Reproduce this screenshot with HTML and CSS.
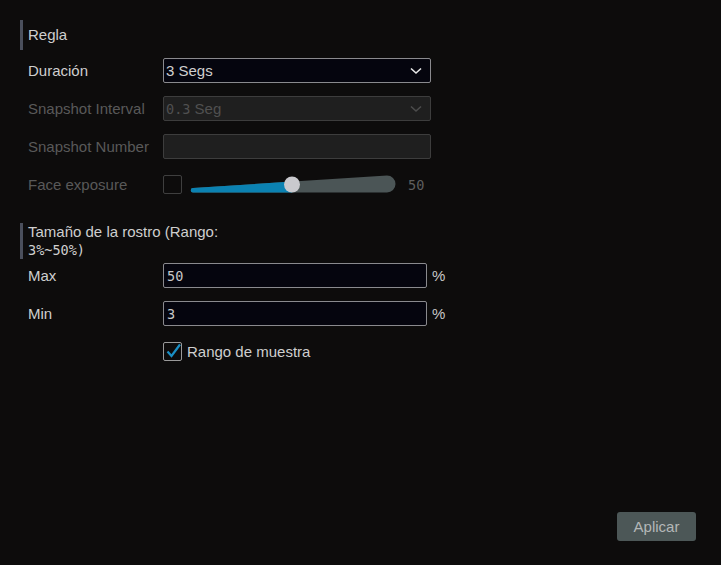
FILE: index.html
```html
<!DOCTYPE html>
<html lang="es">
<head>
    <meta charset="UTF-8">
    <title>Regla</title>
    <link rel="stylesheet" href="styles.css">
</head>
<body>

<div class="page">
    <div class="section-title">Regla</div>

    <div class="row">
        <label class="label">Duración</label>
        <div class="select">
            <span>3 Segs</span>
            <svg class="chevron" width="12" height="8" viewBox="0 0 12 8"><path d="M1 1.5 L6 6 L11 1.5" fill="none" stroke="#e8e8e8" stroke-width="1.6"/></svg>
        </div>
    </div>

    <div class="row disabled">
        <label class="label">Snapshot Interval</label>
        <div class="select">
            <span><span class="mono">0.3</span> Seg</span>
            <svg class="chevron" width="12" height="8" viewBox="0 0 12 8"><path d="M1 1.5 L6 6 L11 1.5" fill="none" stroke="#4c4c4c" stroke-width="1.6"/></svg>
        </div>
    </div>

    <div class="row disabled">
        <label class="label">Snapshot Number</label>
        <div class="select"></div>
    </div>

    <div class="row disabled">
        <label class="label">Face exposure</label>
        <span class="checkbox"></span>
        <svg class="slider" width="206" height="22" viewBox="0 0 206 22">
            <path d="M3 14 L197 1.5 A7.5 7.5 0 0 1 197 18.5 L3 18.5 A2.25 2.25 0 0 1 3 14 Z" fill="#4b5556"/>
            <path d="M3 14 L102 7.6 L102 18.5 L3 18.5 A2.25 2.25 0 0 1 3 14 Z" fill="#0b82b2"/>
            <circle cx="102" cy="10.5" r="8" fill="#c9c9ce"/>
        </svg>
        <span class="value mono">50</span>
    </div>

    <div class="section-title wrap">Tamaño de la rostro (Rango: <span class="mono">3%~50%)</span></div>

    <div class="row">
        <label class="label">Max</label>
        <div class="input mono">50</div>
        <span class="unit">%</span>
    </div>

    <div class="row">
        <label class="label">Min</label>
        <div class="input mono">3</div>
        <span class="unit">%</span>
    </div>

    <div class="row">
        <span class="label"></span>
        <span class="checkbox checked">
            <svg width="18" height="18" viewBox="0 0 18 18"><path d="M3.5 9.5 L7.5 14 L16 2.5" fill="none" stroke="#1a8fc4" stroke-width="2.2"/></svg>
        </span>
        <span class="check-label">Rango de muestra</span>
    </div>

    <div class="footer">
        <button class="btn">Aplicar</button>
    </div>
</div>

</body>
</html>
```

FILE: styles.css
```css
body {
    margin: 0;
    padding: 0;
    background-color: #0d0c0c;
    font-family: "Liberation Sans", Arial, sans-serif;
    font-size: 15px;
    color: #cfcfcf;
}
.page {
    width: 721px;
    height: 565px;
    box-sizing: border-box;
    padding: 20px 0 0 20px;
    display: flex;
    flex-direction: column;
}
.mono {
    font-family: "DejaVu Sans Mono", monospace;
    font-size: 13.5px;
}
.section-title {
    border-left: 3px solid #4a4f5c;
    padding-left: 5px;
    line-height: 30px;
    height: 30px;
    margin-bottom: 8px;
}
.section-title.wrap {
    width: 210px;
    height: auto;
    line-height: 18px;
    margin-top: 13px;
    margin-bottom: 4px;
}
.row {
    display: flex;
    align-items: center;
    height: 25px;
    margin-bottom: 13px;
    padding-left: 8px;
}
.label {
    width: 135px;
    flex-shrink: 0;
}
.disabled .label {
    color: #595959;
}
.select {
    width: 268px;
    height: 25px;
    box-sizing: border-box;
    border: 1px solid #8a8a8e;
    border-radius: 2px;
    background-color: #05050e;
    display: flex;
    align-items: center;
    justify-content: space-between;
    padding: 0 8px 0 2px;
}
.disabled .select {
    background-color: #1f1f1f;
    border-color: #3d3d3d;
    color: #505050;
}
.input {
    width: 264px;
    height: 25px;
    box-sizing: border-box;
    border: 1px solid #8a8a8e;
    border-radius: 2px;
    background-color: #05050e;
    display: flex;
    align-items: center;
    padding-left: 3px;
    color: #c8c8c8;
}
.unit {
    margin-left: 5px;
    color: #c8c8c8;
}
.checkbox {
    width: 19px;
    height: 19px;
    box-sizing: border-box;
    border: 1px solid #3f3f3f;
    border-radius: 2px;
    flex-shrink: 0;
}
.checkbox.checked {
    border-color: #9a9a9a;
    position: relative;
}
.checkbox.checked svg {
    position: absolute;
    left: 0;
    top: -1px;
}
.check-label {
    margin-left: 5px;
}
.slider {
    margin-left: 8px;
    margin-top: 1px;
}
.value {
    margin-left: 12px;
    color: #5e5e5e;
}
.footer {
    margin-top: auto;
    display: flex;
    justify-content: flex-end;
    padding: 0 25px 24px 0;
}
.btn {
    width: 79px;
    height: 29px;
    border: none;
    border-radius: 3px;
    background-color: #4c5757;
    color: #b4b8b8;
    font-family: "Liberation Sans", Arial, sans-serif;
    font-size: 15px;
}
```
